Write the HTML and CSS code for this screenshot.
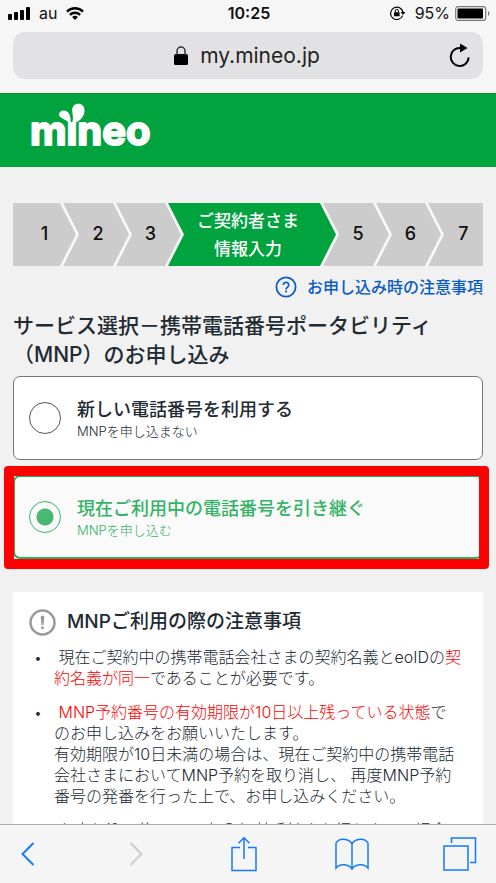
FILE: index.html
```html
<!DOCTYPE html>
<html lang="ja">
<head>
  <meta charset="UTF-8">
  <meta name="viewport" content="width=device-width, initial-scale=1.0">
  <title>mineo</title>
  <link rel="stylesheet" href="styles.css">
</head>
<body>
  <div class="browser-top">
    <div class="status-bar">
      <div class="status-left">
        <svg width="22" height="13" viewBox="0 0 22 13">
          <rect x="0" y="7" width="4" height="6" rx="1"/>
          <rect x="6" y="5" width="4" height="8" rx="1"/>
          <rect x="12" y="3" width="4" height="10" rx="1"/>
          <rect x="18" y="0" width="4" height="13" rx="1"/>
        </svg>
        <span>au</span>
        <svg width="18" height="13" viewBox="0 0 18 13" fill="none" stroke="#000" stroke-width="2.4">
          <path d="M1 4.6a11.4 11.4 0 0 1 16 0"/>
          <path d="M3.9 7.8a7.3 7.3 0 0 1 10.2 0"/>
          <path d="M9 13l-2.9-2.9a4.2 4.2 0 0 1 5.8 0z" fill="#000" stroke="none"/>
        </svg>
      </div>
      <span class="clock">10:25</span>
      <div class="status-right">
        <svg width="16" height="14" viewBox="0 0 16 14">
          <path d="M12.6 9.6A6.2 6.2 0 1 1 13 7" fill="none" stroke="#000" stroke-width="1.2"/>
          <path d="M10.6 6h4.8L13 9z"/>
          <rect x="4" y="6.2" width="5.6" height="4" rx=".5"/>
          <path d="M5.2 6.4V5a1.6 1.6 0 0 1 3.2 0v1.4" fill="none" stroke="#000"/>
        </svg>
        <span class="percent">95%</span>
        <svg width="35" height="15" viewBox="0 0 35 15">
          <rect x=".7" y=".7" width="30" height="13.6" rx="2.5" fill="none" stroke="#777" stroke-width="1.2"/>
          <rect x="2.5" y="2.5" width="25.5" height="10" rx="1"/>
          <path d="M33 5v5q1.4-.8 1.4-2.5T33 5z" fill="#777"/>
        </svg>
      </div>
    </div>
    <div class="address-bar">
      <span class="address">
        <svg width="14" height="19" viewBox="0 0 14 19">
          <rect x="0" y="8" width="14" height="11" rx="1.5"/>
          <path d="M3 9V5.2a4 4.2 0 0 1 8 0V9" fill="none" stroke="#333" stroke-width="1.5"/>
        </svg>
        my.mineo.jp
      </span>
      <button class="reload" aria-label="再読み込み">
        <svg width="22" height="26" viewBox="0 0 22 26">
          <path d="M19.7 14.4A9 9 0 1 1 11.5 5" fill="none" stroke="#000" stroke-width="2"/>
          <path d="M11 .6l7.6 4.4L11 9.4z"/>
        </svg>
      </button>
    </div>
  </div>

  <header class="site-header">
    <a href="#" class="logo" aria-label="mineo">
      <svg width="140" height="56" viewBox="0 0 140 56" fill="#fff">
        <text class="logo-text" x="1" y="42">mıneo</text>
        <path d="M42.500 21C50 19.500 55.500 14 55.500 7.500C55.500 3 52.800 .8 49.500 .8C45.800 .8 43.200 3.500 43.200 7C43.200 12.500 45.500 15 42.500 21Z"/>
        <path d="M41.300 21C42.500 14 40.500 7.500 34.500 7.500C32 7.500 30 9.500 30 11.500C30 15.500 37 15.500 41.300 21Z"/>
      </svg>
    </a>
  </header>

  <main>
    <ol class="steps">
      <li class="step first">1</li>
      <li class="step">2</li>
      <li class="step">3</li>
      <li class="step current">ご契約者さま<br>情報入力</li>
      <li class="step">5</li>
      <li class="step">6</li>
      <li class="step last">7</li>
    </ol>

    <a href="#" class="help-link">
      <svg width="22" height="22" viewBox="0 0 22 22" fill="none" stroke="currentColor">
        <circle cx="11" cy="11" r="9.600" stroke-width="1.800"/>
        <path d="M8.300 9a2.700 2.700 0 1 1 4.400 2.100c-1 .8-1.700 1.200-1.700 2.300" stroke-width="1.700"/>
        <circle cx="11" cy="15.500" r="1.100" fill="currentColor" stroke="none"/>
      </svg>
      お申し込み時の注意事項
    </a>

    <h1>サービス選択－携帯電話番号ポータビリティ<br>（MNP）のお申し込み</h1>

    <form class="options">
      <label class="option">
        <input type="radio" name="mnp" value="new">
        <span class="option-text">
          <span class="option-title">新しい電話番号を利用する</span>
          <span class="option-note">MNPを申し込まない</span>
        </span>
      </label>
      <label class="option selected">
        <input type="radio" name="mnp" value="port" checked>
        <span class="option-text">
          <span class="option-title">現在ご利用中の電話番号を引き継ぐ</span>
          <span class="option-note">MNPを申し込む</span>
        </span>
      </label>
    </form>

    <section class="notice">
      <h2>
        <svg width="27" height="27" viewBox="0 0 27 27">
          <circle cx="13.500" cy="13.500" r="12" fill="none" stroke="#999" stroke-width="2.500"/>
          <path d="M11.700 8.500q0-1.900 1.800-1.900t1.800 1.900l-.9 7.500h-1.800z" fill="#999"/>
          <circle cx="13.500" cy="18.800" r="1.500" fill="#999"/>
        </svg>
        MNPご利用の際の注意事項
      </h2>
      <ul>
        <li>&nbsp;現在ご契約中の携帯電話会社さまの契約名義とeoIDの<em>契<br>約名義が同一</em>であることが必要です。</li>
        <li>&nbsp;<em>MNP予約番号の有効期限が10日以上残っている状態</em>で<br>のお申し込みをお願いいたします。<br>有効期限が10日未満の場合は、現在ご契約中の携帯電話<br>会社さまにおいてMNP予約を取り消し、 再度MNP予約<br>番号の発番を行った上で、お申し込みください。</li>
        <li>&nbsp;お申し込み後、MNP転入切替手続きを行うまでの場合</li>
      </ul>
    </section>
  </main>

  <nav class="toolbar">
    <button aria-label="戻る">
      <svg width="14" height="24" viewBox="0 0 14 24"><path d="M12.500 1L1.500 12l11 11" stroke-width="2"/></svg>
    </button>
    <button aria-label="進む" disabled>
      <svg width="14" height="24" viewBox="0 0 14 24"><path d="M1.500 1l11 11-11 11" stroke-width="2"/></svg>
    </button>
    <button aria-label="共有">
      <svg width="26" height="36" viewBox="0 0 26 36"><path d="M9 11.500H1v23h24v-23h-8M13 23V2M7.500 7.200L13 1.700l5.500 5.500"/></svg>
    </button>
    <button aria-label="ブックマーク">
      <svg width="34" height="34" viewBox="0 0 34 34"><path d="M17 7C14 1 4 .5 1 6v25c4-5 13-4 16 1 3-5 12-6 16-1V6C30 .5 20 1 17 7v25"/></svg>
    </button>
    <button aria-label="タブ">
      <svg width="34" height="34" viewBox="0 0 34 34"><path d="M1 9h24v24H1zM8.500 6V1H32.500v24.500H27"/></svg>
    </button>
  </nav>
</body>
</html>
```
FILE: styles.css
```css
* {
  box-sizing: border-box;
}

body {
  margin: 0;
  height: 100vh;
  display: flex;
  flex-direction: column;
  background-color: #f1f1f1;
  color: #222a33;
  font-family: Inter, "Noto Sans CJK JP", sans-serif;
}

button {
  padding: 0;
  border: none;
  background: none;
  cursor: pointer;
}

svg {
  display: block;
  flex: none;
}

/* browser chrome */
.browser-top {
  padding: 1px 13px 14px;
  background-color: #f6f6f6;
  color: #111;
}

.status-bar {
  display: grid;
  grid-template-columns: 1fr auto 1fr;
  align-items: center;
  height: 24px;
  margin: 0 -7px 7px -5px;
  font-size: 16px;
}

.status-left,
.status-right {
  display: flex;
  align-items: center;
  gap: 9px;
}

.status-right {
  justify-content: flex-end;
}

.percent {
  margin-right: -4px;
}

.clock {
  font-weight: 600;
}

.address-bar {
  display: flex;
  align-items: center;
  height: 47px;
  padding: 0 12px 0 32px;
  border-radius: 12px;
  background-color: #e2e2e4;
}

.address {
  flex: 1;
  display: flex;
  justify-content: center;
  align-items: center;
  gap: 12px;
  font-size: 21px;
  color: #222;
}

/* page */
.site-header {
  flex: none;
  height: 74px;
  padding: 9px 29px;
  border-top: 1px solid #1c8a35;
  background-color: #00a33e;
}

.logo {
  display: inline-block;
}

.logo-text {
  font-size: 40px;
  font-weight: 700;
  stroke: #fff;
  stroke-width: 2px;
  stroke-linejoin: round;
}

main {
  flex: 1;
  min-height: 0;
  overflow: hidden;
  padding: 36px 13px 0;
}

.steps {
  display: grid;
  grid-template-columns: 50fr 53fr 52fr 155fr 53fr 52fr 55fr;
  height: 63px;
  margin: 0;
  padding: 0;
  list-style: none;
  background-color: #f9f9f9;
  color: #111;
  font-size: 18px;
  font-weight: 500;
}

/* each step's arrow tip reaches into the next column */
.step {
  display: flex;
  justify-content: center;
  align-items: center;
  margin-right: -13px;
  padding: 0 0 3px 4px;
  background-color: #ccc;
  clip-path: polygon(0 0, calc(100% - 16px) 0, 100% 50%, calc(100% - 16px) 100%, 0 100%, 16px 50%);
}

.step.first {
  padding-left: 0;
  clip-path: polygon(0 0, calc(100% - 16px) 0, 100% 50%, calc(100% - 16px) 100%, 0 100%);
}

.step.last {
  margin-right: 0;
  padding-left: 16px;
  clip-path: polygon(0 0, 100% 0, 100% 100%, 0 100%, 16px 50%);
}

.step.current {
  padding: 0 8px 0 0;
  background-color: #00a33e;
  color: #fff;
  font-size: 17px;
  line-height: 28px;
  text-align: center;
}

.help-link {
  display: flex;
  justify-content: flex-end;
  align-items: center;
  gap: 10px;
  margin-top: 9px;
  color: #0b5bc4;
  font-size: 16px;
  font-weight: 500;
  line-height: 24px;
  text-decoration: none;
}

h1 {
  margin: 12px 0 7px;
  font-size: 21px;
  font-weight: 500;
  line-height: 29px;
  white-space: nowrap;
}

.options {
  display: flex;
  flex-direction: column;
  gap: 15px;
}

.option {
  display: flex;
  align-items: center;
  gap: 16px;
  height: 84px;
  padding: 0 15px;
  border: 1px solid #777;
  border-radius: 7px;
  background-color: #fff;
}

.option input {
  appearance: none;
  flex: none;
  width: 32px;
  height: 32px;
  margin: 0;
  border: 1px solid #555;
  border-radius: 50%;
}

.option input:checked {
  border-color: #3cb66b;
  background: radial-gradient(circle, #4ab873 8px, transparent 9px);
}

.option-title,
.option-note {
  display: block;
}

.option-title {
  padding-top: 2px;
  font-size: 18px;
  font-weight: 500;
  line-height: 24px;
}

.option-note {
  font-size: 13px;
  font-weight: 300;
  line-height: 18px;
}

.option.selected {
  position: relative;
  border: 2px solid #2aae60;
  padding: 0 14px;
  background-color: #fafafa;
  color: #33b365;
}

/* red frame round the chosen option */
.option.selected::after {
  content: "";
  position: absolute;
  inset: -11px -8px -12px -11px;
  border: 10px solid #f00;
  border-radius: 4px;
}

.notice {
  margin-top: 33px;
  padding: 16px;
  background-color: #fff;
}

.notice h2 {
  display: flex;
  align-items: center;
  gap: 11px;
  margin: 0 0 11px;
  font-size: 19px;
  font-weight: 500;
  line-height: 28px;
}

.notice ul {
  margin: 0;
  padding-left: 25px;
  font-size: 16px;
  font-weight: 300;
  line-height: 21px;
  white-space: nowrap;
  list-style: none;
}

.notice li {
  margin-bottom: 13px;
}

.notice li::before {
  content: "•";
  float: left;
  margin-left: -20px;
  font-size: 14px;
}

.notice em {
  color: #f00;
  font-style: normal;
}

/* bottom toolbar */
.toolbar {
  flex: none;
  display: flex;
  justify-content: space-between;
  align-items: center;
  height: 59px;
  padding: 0 18px 0 10px;
  border-top: 1px solid #aaa;
  background-color: #f5f5f5;
}

.toolbar button {
  display: flex;
  justify-content: center;
  width: 36px;
  color: #147aff;
}

.toolbar button:disabled {
  color: #ccc;
}

.toolbar svg {
  fill: none;
  stroke: currentColor;
  stroke-width: 1.5px;
}
```
